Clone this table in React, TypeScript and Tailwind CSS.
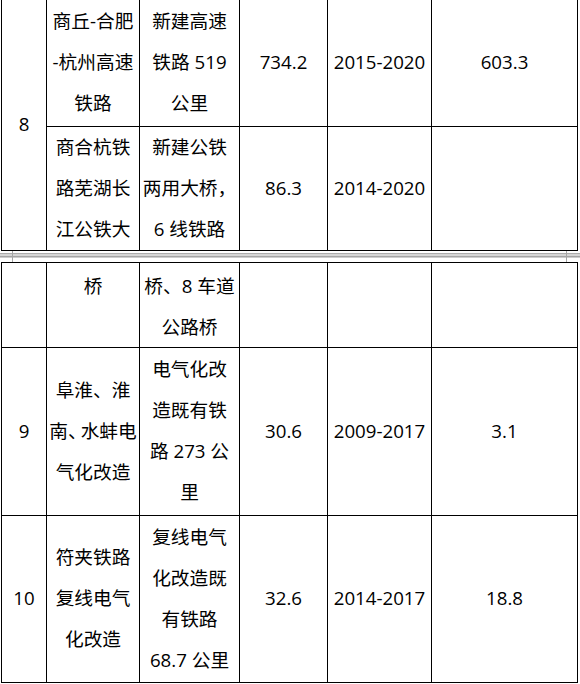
import React from "react";

type CellProps = {
  lines?: React.ReactNode[];
  top?: boolean;
  className?: string;
};

function Cell({ lines = [], top = false, className = "" }: CellProps) {
  return (
    <div
      className={`border-r border-b border-black flex flex-col items-center ${
        top ? "justify-start pt-[2px]" : "justify-center pb-[3px]"
      } text-center ${className}`}
    >
      {lines.map((l, i) => (
        <div key={i} className="h-[41px] leading-[41px] whitespace-nowrap">
          {l}
        </div>
      ))}
    </div>
  );
}

const cols = "grid grid-cols-[45px_93px_100px_88px_104px_146px]";

export default function App() {
  return (
    <div className="w-[580px] h-[684px] bg-white overflow-hidden text-black text-[18.7px] font-['Open_Sans','Noto_Sans_CJK_SC',sans-serif]">
      {/* Section 1 */}
      <div className={`ml-px w-[577px] border-l border-black ${cols} grid-rows-[127px_124px]`}>
        <Cell className="row-span-2" lines={["8"]} />
        <Cell lines={["商丘-合肥", "-杭州高速", "铁路"]} />
        <Cell lines={["新建高速", "铁路 519", "公里"]} />
        <Cell lines={["734.2"]} />
        <Cell lines={["2015-2020"]} />
        <Cell lines={["603.3"]} />
        <Cell lines={["商合杭铁", "路芜湖长", "江公铁大"]} />
        <Cell lines={["新建公铁", "两用大桥，", "6 线铁路"]} />
        <Cell lines={["86.3"]} />
        <Cell lines={["2014-2020"]} />
        <Cell />
      </div>

      {/* Page break band */}
      <div className="relative h-[11px]">
        <div className="h-[2px]" />
        <div className="h-px bg-[#acacac]" />
        <div className="h-[2px] bg-[#d5d5d5]" />
        <div className="h-px bg-[#a4a4a4]" />
        <div className="h-px bg-[#cdcdcd]" />
        <div className="absolute left-[12px] top-0 h-[11px] w-px bg-[#a6a6a6]" />
        <div className="absolute left-[566px] top-0 h-[11px] w-px bg-[#a6a6a6]" />
      </div>

      {/* Section 2 */}
      <div className={`ml-px w-[577px] border-l border-t border-black ${cols} grid-rows-[85px_168px_167px]`}>
        <Cell />
        <Cell top lines={["桥"]} />
        <Cell top lines={["桥、8 车道", "公路桥"]} />
        <Cell />
        <Cell />
        <Cell />

        <Cell lines={["9"]} />
        <Cell
          lines={[
            "阜淮、淮",
            <span>
              南<span className="tracking-[-6px]">、</span>水蚌电
            </span>,
            "气化改造",
          ]}
        />
        <Cell lines={["电气化改", "造既有铁", "路 273 公", "里"]} />
        <Cell lines={["30.6"]} />
        <Cell lines={["2009-2017"]} />
        <Cell lines={["3.1"]} />

        <Cell lines={["10"]} />
        <Cell lines={["符夹铁路", "复线电气", "化改造"]} />
        <Cell lines={["复线电气", "化改造既", "有铁路", "68.7 公里"]} />
        <Cell lines={["32.6"]} />
        <Cell lines={["2014-2017"]} />
        <Cell lines={["18.8"]} />
      </div>
    </div>
  );
}
